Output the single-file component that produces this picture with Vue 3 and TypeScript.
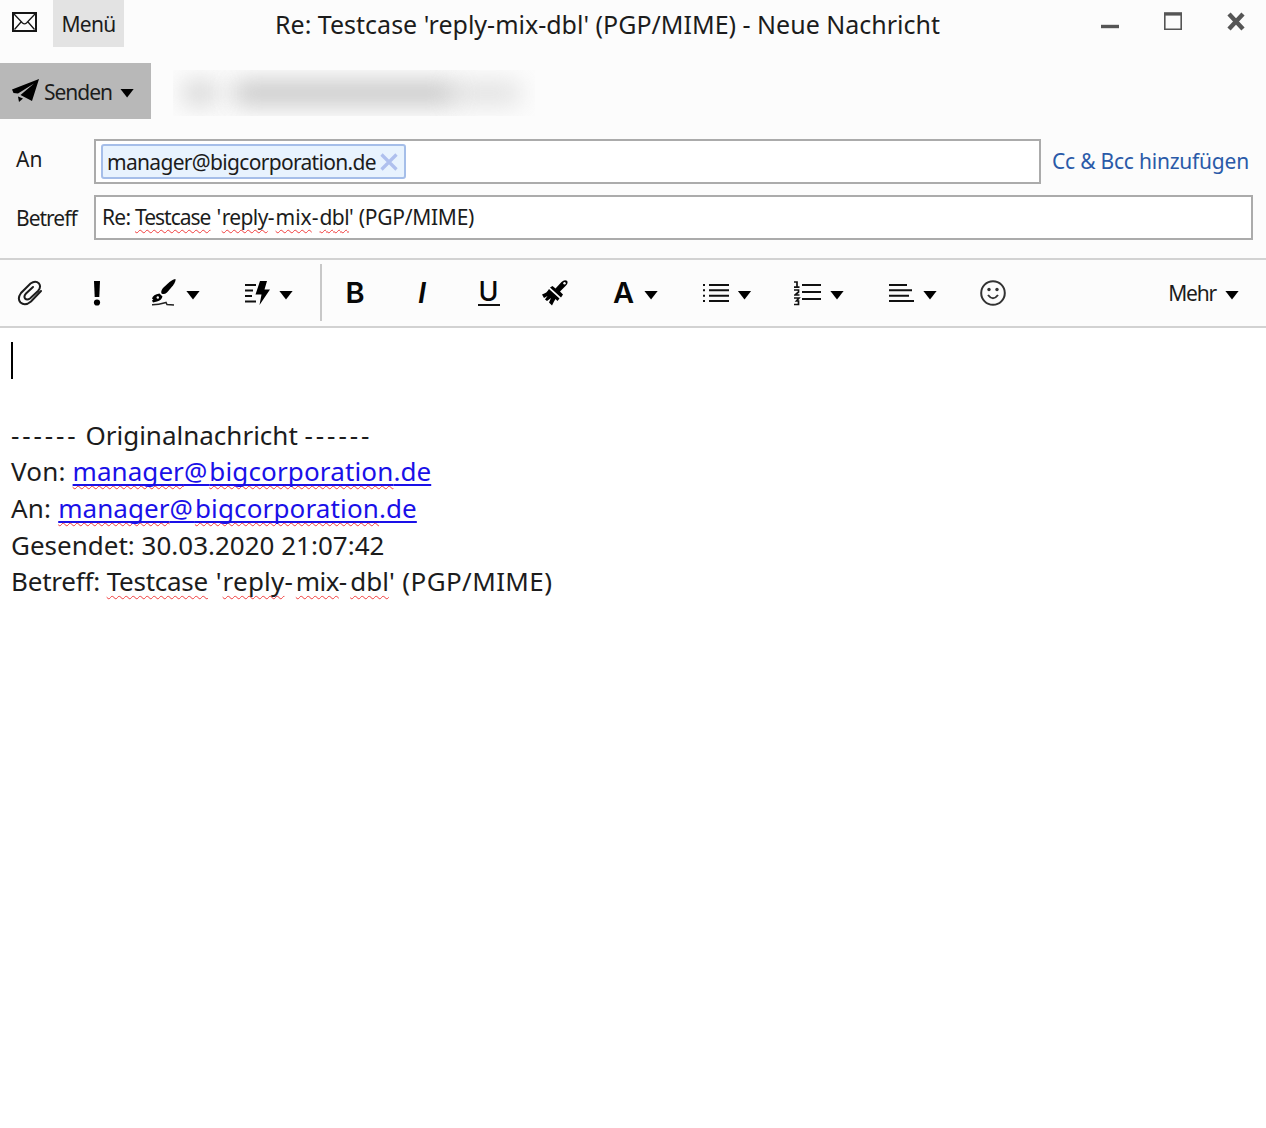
<script setup lang="ts">
interface Tool {
  id: string
  label: string
  menu?: boolean
}

const tools: Tool[] = [
  { id: 'attach', label: 'Anhang' },
  { id: 'priority', label: 'Priorität' },
  { id: 'signature', label: 'Signatur', menu: true },
  { id: 'quick', label: 'Schnelltext', menu: true },
  { id: 'separator', label: '' },
  { id: 'bold', label: 'Fett' },
  { id: 'italic', label: 'Kursiv' },
  { id: 'underline', label: 'Unterstrichen' },
  { id: 'brush', label: 'Format' },
  { id: 'color', label: 'Textfarbe', menu: true },
  { id: 'bullets', label: 'Liste', menu: true },
  { id: 'numbers', label: 'Nummerierung', menu: true },
  { id: 'align', label: 'Ausrichtung', menu: true },
  { id: 'smiley', label: 'Smiley' },
]

const headers = ['Von', 'An']
</script>

<template>
  <div class="window">
    <header class="titlebar">
      <svg class="mail" width="25" height="20" viewBox="0 0 25 20" fill="none" stroke="#161616">
        <rect x="1" y="1" width="23" height="18" stroke-width="2" />
        <path d="M2 2 L10.5 11 Q12.5 12.7 14.5 11 L23 2 M2.5 17.5 L9 10 M22.5 17.5 L16 10" stroke-width="1.3" />
      </svg>
      <div class="menu"><span>Menü</span></div>
      <h1><span>Re: Testcase 'reply-mix-dbl' (PGP/MIME) - Neue Nachricht</span></h1>
      <div class="controls">
        <svg width="18" height="22" viewBox="0 0 18 22"><path d="M0 15.5H18" stroke="#555" stroke-width="3.4" /></svg>
        <svg width="18" height="22" viewBox="0 0 18 22"><path d="M.8 3V18.2H17.2V3" fill="none" stroke="#555" stroke-width="1.6" /><path d="M0 2.9H18" stroke="#555" stroke-width="3.4" /></svg>
        <svg width="18" height="22" viewBox="0 0 18 22"><path d="M2 3L16 18M16 3L2 18" stroke="#555" stroke-width="4.400" /></svg>
      </div>
    </header>

    <div class="sendrow">
      <button class="send">
        <svg width="27" height="24" viewBox="0 0 27 24">
          <path d="M27 0L0 10.500L1.500 14L6 14.500L22 4.500L8.500 16L20 22Z" fill="#000" />
          <path d="M6 17.500L11 19.500L7 23Z" fill="#000" />
        </svg>
        <span>Senden</span>
        <i class="caret"></i>
      </button>
      <div class="sender"><i class="smudge a"></i><i class="smudge b"></i><i class="smudge c"></i></div>
    </div>

    <div class="field to">
      <label><span>An</span></label>
      <div class="box">
        <div class="chip">
          <span>manager@bigcorporation.de</span>
          <svg width="18" height="18" viewBox="0 0 18 18"><path d="M1.500 1.500L16.500 16.500M16.500 1.500L1.500 16.500" stroke="#afc0ee" stroke-width="3.200" /></svg>
        </div>
      </div>
      <a class="cc">Cc &amp; Bcc hinzufügen</a>
    </div>
    <div class="field subject">
      <label><span>Betreff</span></label>
      <div class="box">
        <span class="value"><span class="lead">Re: </span><u class="w1">Testcase</u><span class="q"> '</span><u class="w2">reply</u><span class="dash">-</span><u class="w3">mix</u><span class="dash">-</span><u class="w4">dbl</u><span class="tail">' (PGP/MIME)</span></span>
      </div>
    </div>

    <nav class="toolbar">
      <div v-for="t in tools" :key="t.id" class="tool" :class="t.id" :aria-label="t.label">
        <svg v-if="t.id === 'attach'" width="26" height="26" viewBox="0 0 26 26" fill="none" stroke="#1c1c1c" stroke-width="2" stroke-linecap="round">
          <path d="M24 11L14 21.5Q8 26.5 3.5 22.5Q0 18.5 4 13L13.5 3.5Q18.500 0 22 3.500Q24.500 7 21 11L13 18.500Q10 20.500 8 18.500Q6.500 16 9 13.500L16 7" />
        </svg>
        <svg v-else-if="t.id === 'priority'" width="8" height="26" viewBox="0 0 8 26"><path d="M1 1H7L6.300 17H1.700Z" /><circle cx="4" cy="22.500" r="3.100" /></svg>
        <svg v-else-if="t.id === 'signature'" width="24" height="27" viewBox="0 0 24 27">
          <path d="M23.500 0Q24 2 21 6.500L15 13.500Q12 16 9.500 14.500Q8.500 12 11 9L17.500 3Q21.500 0 23.500 0Z" />
          <path d="M7.500 14.500L10.500 17.500Q9.500 21.500 5 22.500L1 23.500L0 21.500L4 18.500L3 22L0 19.500Q1 15.500 7.500 14.500Z" />
          <circle cx="5.800" cy="18.500" r="1.200" fill="#fcfcfc" />
          <path d="M0 25.700Q6 25.800 14 23.500L15 25.500L22 26" fill="none" stroke="#222" stroke-width="1.500" />
        </svg>
        <svg v-else-if="t.id === 'quick'" width="25" height="26" viewBox="0 0 25 26">
          <path d="M0 5H11M0 10.500H8M0 16H7M0 21.500H11" stroke="#111" stroke-width="2" />
          <path d="M15 1H22L19.500 9.500H25L14.500 25L16.500 14.500H10.500Z" />
        </svg>
        <b v-else-if="t.id === 'bold'">B</b>
        <em v-else-if="t.id === 'italic'">I</em>
        <span v-else-if="t.id === 'underline'" class="u">U</span>
        <svg v-else-if="t.id === 'brush'" width="26" height="26" viewBox="0 0 26 26">
          <path d="M10.500 6L13.500 8.500L19.500 2Q22.500-.8 25 .8Q26.500 3 24 5.500L18 11.500L21 14.500L19 17.500L8 7.500Z" />
          <path d="M7 9L17.500 18.500L15.500 21L13.500 19L12 21.500L10 25.500L7 22.500L9 18L5 21L3 19.500L5.500 16L2 18L0 14.500Q5 13 7 9Z" />
          <circle cx="22.500" cy="3.200" r="1.200" fill="#fcfcfc" />
        </svg>
        <b v-else-if="t.id === 'color'">A</b>
        <svg v-else-if="t.id === 'bullets'" width="26" height="20" viewBox="0 0 26 20" stroke="#111" stroke-width="2">
          <path d="M0 2H2M0 7.300H2M0 12.700H2M0 18H2M6 2H26M6 7.300H26M6 12.700H26M6 18H26" />
        </svg>
        <svg v-else-if="t.id === 'numbers'" width="27" height="26" viewBox="0 0 27 26" stroke="#111" fill="none" stroke-width="1.700">
          <path d="M8 5H27M8 12H27M8 19H27" stroke-width="2" />
          <path d="M0 2H3V7M0 7.200H5.500M0 10H4.500V12L1 15H5.500M0 18H5L2.500 21H4.500V24.500H0" />
        </svg>
        <svg v-else-if="t.id === 'align'" width="25" height="20" viewBox="0 0 25 20" stroke="#111" stroke-width="2">
          <path d="M0 2H18M0 7.300H23M0 12.700H20M0 18H25" />
        </svg>
        <svg v-else-if="t.id === 'smiley'" width="26" height="26" viewBox="0 0 26 26" fill="none" stroke="#333" stroke-width="2">
          <circle cx="13" cy="13" r="11.800" />
          <circle cx="9" cy="9.500" r="1.700" fill="#333" stroke="none" /><circle cx="17" cy="9.500" r="1.700" fill="#333" stroke="none" />
          <path d="M8 15Q13 21.500 18 15" />
        </svg>
        <i v-if="t.menu" class="caret"></i>
      </div>
      <div class="more"><span>Mehr</span><i class="caret"></i></div>
    </nav>

    <main class="editor">
      <div class="cursorline"><i class="cursor"></i></div>
      <p>&nbsp;</p>
      <p><span class="rule">------</span><span> Originalnachricht </span><span class="rule">------</span></p>
      <p v-for="h in headers" :key="h"><span class="hd">{{ h }}: </span><a><u>manager</u><span class="at">@</span><u class="dom">bigcorporation</u>.de</a></p>
      <p><span class="date">Gesendet: 30.03.2020 21:07:42</span></p>
      <p><span class="lead">Betreff: </span><u class="w1">Testcase</u><span class="q"> '</span><u class="w2">reply</u><span class="dash">-</span><u class="w3">mix</u><span class="dash">-</span><u class="w4">dbl</u><span class="tail">' (PGP/MIME)</span></p>
    </main>
  </div>
</template>

<style>
body { margin: 0; }
</style>

<style scoped>
.window {
  width: 1266px;
  height: 1128px;
  overflow: hidden;
  background: #fcfcfc;
  color: #1c1c1c;
  font-family: "Noto Sans", "Open Sans", sans-serif;
  font-size: 21px;
  display: flex;
  flex-direction: column;
}
svg { display: block; flex: none; }
span, a { white-space: pre; }
.titlebar { display: flex; height: 63px; align-items: flex-start; flex: none; }
.mail { margin: 12px 16px 0 12px; }
.menu { width: 71px; height: 47px; background: #e3e3e3; line-height: 48px; text-align: center; letter-spacing: -.7px; }
h1 { margin: 0 0 0 151px; width: 665px; font-size: 25px; font-weight: 400; line-height: 48px; flex: none; }
.controls { display: flex; gap: 45px; margin: 11px 0 0 161px; }
.sendrow { display: flex; height: 76px; flex: none; }
.send {
  width: 151px; height: 56px; border: 0; padding: 0 0 0 12px; background: #b8b8b8;
  display: flex; align-items: center; font: inherit; color: inherit;
}
.send span { margin: 2px 8px 0 5px; letter-spacing: -1px; }
.send .caret { margin-top: 4px; }
.caret { width: 14px; height: 9px; background: #000; clip-path: polygon(0 0, 100% 0, 50% 100%); flex: none; }
.sender { width: 362px; height: 46px; margin: 7px 0 0 22px; overflow: hidden; display: flex; align-items: center; }
.smudge { height: 22px; background: #b4b4b4; filter: blur(12px); }
.a { width: 32px; margin-left: 11px; opacity: .6; }
.b { width: 220px; margin-left: 18px; opacity: .8; }
.c { width: 66px; opacity: .4; }
.field { display: flex; height: 45px; flex: none; }
.field label { width: 78px; padding-left: 16px; }
.to label { line-height: 40px; }
.subject label { line-height: 46px; letter-spacing: -1px; }
.box { box-sizing: border-box; border: 2px solid #ababab; background: #fff; }
.to { margin-bottom: 11px; }
.to .box { width: 947px; padding: 3px 0 0 5px; }
.subject .box { width: 1159px; padding-left: 6px; line-height: 40px; }
.chip {
  box-sizing: border-box; width: 305px; height: 35px; border: 2px solid #a5bee9; border-radius: 3px;
  background: #e8f3fe; display: flex; align-items: center; padding-left: 4px; justify-content: space-between; padding-right: 6px; line-height: 34px;
  letter-spacing: -.68px;
}
.cc { color: #2a5aa8; margin-left: 11px; line-height: 44px; letter-spacing: -.22px; }
u { text-decoration: underline wavy #f03c3c 1.3px; text-underline-offset: 4px; text-decoration-skip-ink: none; }
.value .lead { letter-spacing: -.75px; }
.value .w1 { letter-spacing: -1px; }
.value .q { letter-spacing: .5px; }
.value .w2, .value .w4 { letter-spacing: -.6px; }
.value .dash { letter-spacing: 1px; }
.value .tail { letter-spacing: -.25px; }
.toolbar {
  margin-top: 18px; height: 70px; box-sizing: border-box; flex: none;
  border-top: 2px solid #d2d2d2; border-bottom: 2px solid #d2d2d2;
  display: grid; grid-template-columns: 60px 74px 84px 102px 2px 66px 68px 65px 68px 93px 90px 94px 94px 66px 1fr;
}
.tool { display: flex; align-items: center; justify-content: center; gap: 9px; font: 600 29px/66px Inter, sans-serif; color: #080808; }
.tool b { font-weight: 600; }
.tool svg { position: relative; top: -.5px; }
.tool .caret { margin-top: 4px; }
.signature, .color { gap: 10px; }
.separator { background: #c8c8c8; height: 57px; margin-top: 4px; }
.italic em { font-weight: 600; }
.u { font-weight: 500; font-size: 27px; line-height: 22px; border-bottom: 2px solid #111; height: 23px; padding: 0 1px; }
.more { display: flex; align-items: center; justify-content: flex-end; padding-right: 27px; gap: 9px; letter-spacing: -1.2px; }
.more .caret { margin-top: 4px; }
.editor { flex: 1; background: #fff; padding: 14px 11px; font-size: 26px; line-height: 36.7px; }
.editor p { margin: 0; height: 36.7px; }
.cursorline { height: 38px; display: flex; }
.cursor { width: 2px; height: 37px; background: #000; }
.editor a { color: #1a10e8; text-decoration: underline 2px; text-underline-offset: 3px; letter-spacing: .05px; }
.rule { letter-spacing: 2.9px; }
.hd { letter-spacing: .2px; }
.at { letter-spacing: 2px; }
.dom { letter-spacing: .15px; }
p .lead { letter-spacing: -.2px; }
p .w1 { letter-spacing: -.25px; }
p .q { letter-spacing: 1px; }
p .w2 { letter-spacing: .2px; }
p .dash { letter-spacing: 3px; }
p .w3 { letter-spacing: -.6px; }
p .tail { letter-spacing: .4px; }
</style>
